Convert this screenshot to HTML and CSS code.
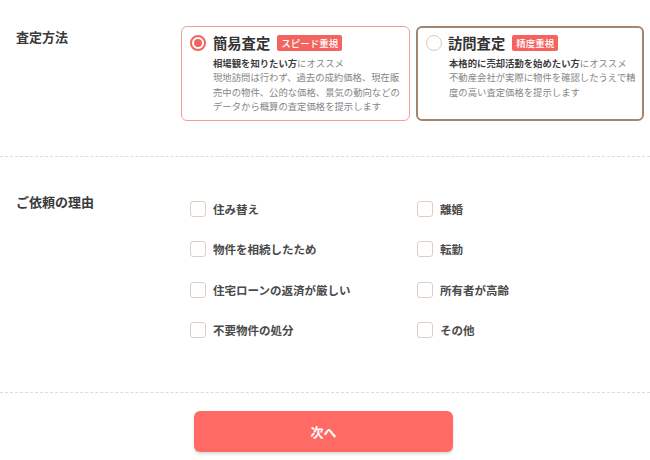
FILE: index.html
```html
<!DOCTYPE html>
<html lang="ja">
<head>
<meta charset="utf-8">
<link rel="stylesheet" href="styles.css">
</head>
<body>
<div class="page">
  <section class="row method">
    <div class="label label-method">査定方法</div>
    <div class="cards">
      <div class="card card-active">
        <div class="card-head">
          <span class="radio radio-on"></span>
          <span class="card-title">簡易査定</span>
          <span class="badge">スピード重視</span>
        </div>
        <p class="desc"><b>相場観を知りたい方</b>にオススメ<br>現地訪問は行わず、過去の成約価格、現在販<br>売中の物件、公的な価格、景気の動向などの<br>データから概算の査定価格を提示します</p>
      </div>
      <div class="card card-hover">
        <div class="card-head">
          <span class="radio"></span>
          <span class="card-title">訪問査定</span>
          <span class="badge">精度重視</span>
        </div>
        <p class="desc"><b>本格的に売却活動を始めたい方</b>にオススメ<br>不動産会社が実際に物件を確認したうえで精<br>度の高い査定価格を提示します</p>
      </div>
    </div>
  </section>
  <section class="row reason">
    <div class="label label-reason">ご依頼の理由</div>
    <div class="checks">
      <label class="check"><span class="box"></span>住み替え</label>
      <label class="check"><span class="box"></span>離婚</label>
      <label class="check"><span class="box"></span>物件を相続したため</label>
      <label class="check"><span class="box"></span>転勤</label>
      <label class="check"><span class="box"></span>住宅ローンの返済が厳しい</label>
      <label class="check"><span class="box"></span>所有者が高齢</label>
      <label class="check"><span class="box"></span>不要物件の処分</label>
      <label class="check"><span class="box"></span>その他</label>
    </div>
  </section>
  <div class="actions">
    <button class="next">次へ</button>
  </div>
</div>
</body>
</html>
```
FILE: styles.css
```css
* { box-sizing: border-box; }
html, body { margin: 0; padding: 0; background: #fff; }
body {
  font-family: "Noto Sans CJK JP", "Noto Sans", sans-serif;
  color: #333;
  width: 650px;
  height: 460px;
  overflow: hidden;
}
.row {
  display: flex;
  border-bottom: 1px dashed #efd6c6;
}
.method { padding: 26px 0 35px 0; }
.reason { padding: 32px 0 42px 0; }
.label {
  width: 181px;
  padding-left: 16px;
  font-size: 13px;
  line-height: 20px;
  font-weight: 700;
  color: #3a3a3a;
  flex-shrink: 0;
}
.label-method { margin-top: 1px; }
.label-reason { margin-top: 3px; }

.cards {
  display: grid;
  grid-template-columns: 229px 228px;
  gap: 6px;
}
.card {
  height: 95px;
  border-radius: 6px;
  background: #fff;
}
.card-active {
  border: 1px solid #f59c98;
  padding: 7px 4px 0 8px;
}
.card-hover {
  border: 2px solid #a3866f;
  padding: 6px 3px 0 8px;
}
.card-head {
  display: flex;
  align-items: center;
  height: 18px;
}
.radio {
  width: 16px;
  height: 16px;
  border-radius: 50%;
  border: 1.5px solid #dccbbc;
  margin-right: 7px;
  flex-shrink: 0;
  position: relative;
}
.card-hover .radio { margin-right: 6px; }
.radio-on {
  border: 2px solid #f4645f;
}
.radio-on::after {
  content: "";
  position: absolute;
  left: 2px;
  top: 2px;
  width: 8px;
  height: 8px;
  border-radius: 50%;
  background: #f4645f;
}
.card-title {
  font-size: 14.3px;
  line-height: 18px;
  font-weight: 700;
  color: #333;
}
.badge {
  margin-left: 7px;
  height: 16px;
  line-height: 16px;
  padding: 0 4px;
  background: #f4645f;
  color: #fff;
  font-size: 9.5px;
  font-weight: 500;
  border-radius: 2px;
}
.desc {
  margin: 4px 0 0 23px;
  font-size: 9.35px;
  line-height: 14.3px;
  color: #858585;
  white-space: nowrap;
}
.desc b { color: #3c3c3c; font-weight: 700; }

.checks {
  margin-left: 9px;
  display: grid;
  grid-template-columns: 227px 227px;
  grid-auto-rows: 40.3px;
}
.check {
  display: flex;
  align-items: center;
  font-size: 11.5px;
  font-weight: 700;
  color: #4a4a4a;
}
.box {
  width: 16px;
  height: 16px;
  border: 1.5px solid #dfcdbf;
  border-radius: 3px;
  margin-right: 7px;
  background: #fff;
}

.actions {
  padding-top: 18px;
  padding-left: 194px;
}
.next {
  display: block;
  width: 259px;
  height: 41px;
  border: none;
  border-radius: 6px;
  background: #ff6a64;
  color: #fff;
  font-family: "Noto Sans CJK JP", "Noto Sans", sans-serif;
  font-size: 13px;
  font-weight: 700;
  box-shadow: 0 2px 3px rgba(0, 0, 0, 0.15);
  cursor: pointer;
}
```
